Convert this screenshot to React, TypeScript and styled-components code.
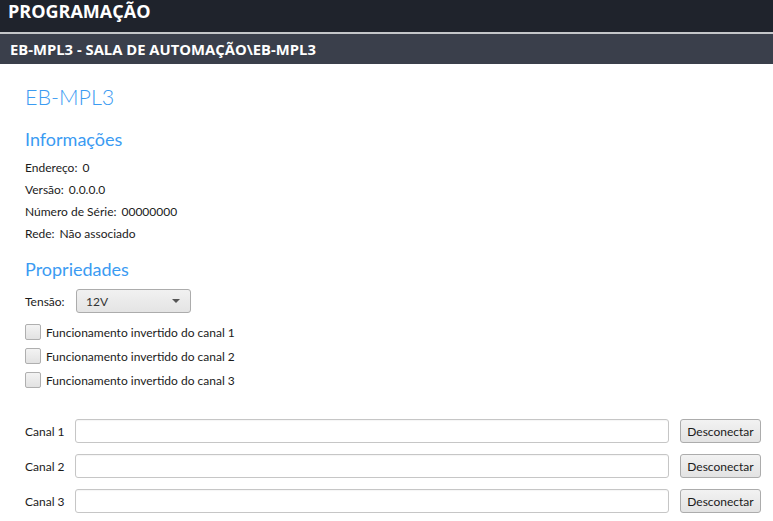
import React from "react";
import styled, { createGlobalStyle } from "styled-components";

const Global = createGlobalStyle`
  html, body { margin: 0; padding: 0; background: #ffffff; }
  body { font-family: Lato, "Noto Sans", sans-serif; color: #1b1b1b; }
  * { box-sizing: border-box; }
`;

const Page = styled.div`
  width: 773px;
  height: 521px;
  overflow: hidden;
  display: flex;
  flex-direction: column;
`;

const TopBar = styled.div`
  height: 34px;
  background: #1f232c;
  color: #ffffff;
  font-family: "Open Sans", "Noto Sans", sans-serif;
  font-weight: 700;
  font-size: 18px;
  line-height: 23px;
  padding: 0 0 0 8px;
  border-bottom: 2px solid #c4c6c9;
`;

const SubBar = styled.div`
  height: 30px;
  background: #3a3f4b;
  color: #ffffff;
  font-family: "Open Sans", "Noto Sans", sans-serif;
  font-weight: 700;
  font-size: 14.8px;
  line-height: 30px;
  padding-left: 10px;
`;

const Content = styled.div`
  padding: 0 12px 0 25px;
  display: flex;
  flex-direction: column;
`;

const Title = styled.div`
  color: #3b9bf2;
  font-size: 21.5px;
  font-weight: 300;
  line-height: 30px;
  margin-top: 18px;
`;

const SectionTitle = styled.div<{ $top: number }>`
  color: #3b9bf2;
  font-size: 18px;
  line-height: 24px;
  margin-top: ${(p) => p.$top}px;
`;

const InfoList = styled.div`
  margin-top: 6px;
  display: flex;
  flex-direction: column;
`;

const InfoLine = styled.div`
  font-size: 12px;
  line-height: 22px;
  display: flex;
  gap: 5px;
`;

const FieldRow = styled.div`
  margin-top: 8px;
  display: flex;
  align-items: center;
  height: 24px;
`;

const Label = styled.span<{ $w: number }>`
  font-size: 12px;
  width: ${(p) => p.$w}px;
  flex: none;
`;

const Select = styled.div`
  width: 115px;
  height: 24px;
  border: 1px solid #acacac;
  border-radius: 3px;
  background: linear-gradient(#f1f1f1, #e4e4e4);
  display: flex;
  align-items: center;
  justify-content: space-between;
  padding: 0 10px 0 9px;
  font-size: 12px;
  color: #333;
`;

const Caret = styled.span`
  width: 0;
  height: 0;
  border-left: 4px solid transparent;
  border-right: 4px solid transparent;
  border-top: 4px solid #555;
`;

const Checks = styled.div`
  margin-top: 7px;
  display: flex;
  flex-direction: column;
`;

const CheckRow = styled.label`
  height: 24px;
  display: flex;
  align-items: center;
  gap: 5px;
  font-size: 12px;
`;

const Box = styled.span`
  width: 16px;
  height: 16px;
  border: 1px solid #afafaf;
  border-radius: 2px;
  background: linear-gradient(#f3f3f3, #e2e2e2);
  flex: none;
`;

const Channels = styled.div`
  margin-top: 27px;
  display: flex;
  flex-direction: column;
  gap: 11px;
`;

const ChannelRow = styled.div`
  display: flex;
  align-items: center;
  height: 24px;
`;

const Input = styled.div`
  flex: 1;
  height: 24px;
  border: 1px solid #c6c6c6;
  border-radius: 3px;
  background: #fff;
  box-shadow: inset 0 1px 1px rgba(0, 0, 0, 0.04);
`;

const Button = styled.div`
  margin-left: 11px;
  width: 81px;
  height: 24px;
  border: 1px solid #acacac;
  border-radius: 3px;
  background: linear-gradient(#f2f2f2, #e3e3e3);
  font-size: 12px;
  display: flex;
  align-items: center;
  justify-content: center;
  color: #1b1b1b;
`;

const info = [
  ["Endereço:", "0"],
  ["Versão:", "0.0.0.0"],
  ["Número de Série:", "00000000"],
  ["Rede:", "Não associado"],
];

export default function App() {
  return (
    <Page>
      <Global />
      <TopBar>PROGRAMAÇÃO</TopBar>
      <SubBar>EB-MPL3 - SALA DE AUTOMAÇÃO\EB-MPL3</SubBar>
      <Content>
        <Title>EB-MPL3</Title>
        <SectionTitle $top={15}>Informações</SectionTitle>
        <InfoList>
          {info.map(([k, v]) => (
            <InfoLine key={k}>
              <span>{k}</span>
              <span>{v}</span>
            </InfoLine>
          ))}
        </InfoList>
        <SectionTitle $top={12}>Propriedades</SectionTitle>
        <FieldRow>
          <Label $w={51}>Tensão:</Label>
          <Select>
            <span>12V</span>
            <Caret />
          </Select>
        </FieldRow>
        <Checks>
          {[1, 2, 3].map((n) => (
            <CheckRow key={n}>
              <Box />
              Funcionamento invertido do canal {n}
            </CheckRow>
          ))}
        </Checks>
        <Channels>
          {[1, 2, 3].map((n) => (
            <ChannelRow key={n}>
              <Label $w={50}>Canal {n}</Label>
              <Input />
              <Button>Desconectar</Button>
            </ChannelRow>
          ))}
        </Channels>
      </Content>
    </Page>
  );
}
